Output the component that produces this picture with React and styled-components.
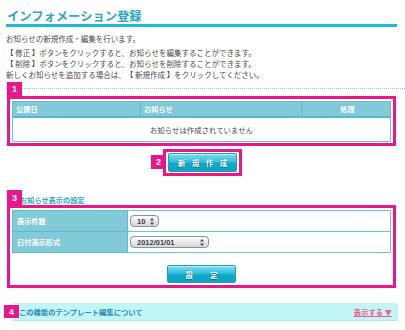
import React from "react";
import styled, { createGlobalStyle } from "styled-components";

const GlobalStyle = createGlobalStyle`
  body {
    margin: 0;
    background: #ffffff;
    font-family: "Noto Sans CJK JP", "Noto Sans", sans-serif;
    color: #4a4a4a;
    text-spacing-trim: space-all;
  }
`;

const PINK = "#e8178c";
const TEAL = "#6cc6da";

function Arrows() {
  return (
    <svg width="4" height="7" viewBox="0 0 4 7">
      <path d="M2 0 L4 2.6 L0 2.6 Z" fill="#3d4450" />
      <path d="M2 7 L4 4.4 L0 4.4 Z" fill="#3d4450" />
    </svg>
  );
}

function App() {
  return (
    <Page>
      <GlobalStyle />
      <Title>インフォメーション登録</Title>
      <Lead>お知らせの新規作成・編集を行います。</Lead>
      <Help>
        【 修正 】ボタンをクリックすると、お知らせを編集することができます。
        <br />
        【 削除 】ボタンをクリックすると、お知らせを削除することができます。
        <br />
        新しくお知らせを追加する場合は、【 新規作成 】をクリックしてください。
      </Help>

      <ListSection>
        <Badge top={0} left={7}>1</Badge>
        <PinkBox pb={1}>
          <Table>
            <thead>
              <tr>
                <Th w={124}>公開日</Th>
                <Th w={157}>お知らせ</Th>
                <Th center>処理</Th>
              </tr>
            </thead>
            <tbody>
              <tr>
                <EmptyCell colSpan={3}>お知らせは作成されていません</EmptyCell>
              </tr>
            </tbody>
          </Table>
        </PinkBox>
      </ListSection>

      <ButtonRow>
        <ButtonFrame>
          <Badge top={3} left={-15}>2</Badge>
          <BlueButton spacing={6.5}>新規作成</BlueButton>
        </ButtonFrame>
      </ButtonRow>

      <SettingSection>
        <Badge top={0} left={7} h={15}>3</Badge>
        <SettingHeading>お知らせ表示の設定</SettingHeading>
        <PinkBox pb={2}>
          <Table>
            <tbody>
              <tr>
                <LabelCell>表示件数</LabelCell>
                <ValueCell>
                  <Select w={29}>
                    <span>10</span>
                    <Arrows />
                  </Select>
                </ValueCell>
              </tr>
              <tr>
                <LabelCell>日付表示形式</LabelCell>
                <ValueCell>
                  <Select w={79}>
                    <span>2012/01/01</span>
                    <Arrows />
                  </Select>
                </ValueCell>
              </tr>
            </tbody>
          </Table>
          <SubmitRow>
            <BlueButton spacing={17} h={18}>設定</BlueButton>
          </SubmitRow>
        </PinkBox>
      </SettingSection>

      <TemplateBar>
        <Badge top={2} left={-8} h={13}>4</Badge>
        <BarTitle>この機能のテンプレート編集について</BarTitle>
        <ShowLink>表示する ▼</ShowLink>
      </TemplateBar>
    </Page>
  );
}

export default App;

const Page = styled.div`
  width: 405px;
  height: 330px;
  overflow: hidden;
`;

const Title = styled.h1`
  margin: 8px 8px 0 6px;
  padding-left: 1px;
  height: 16px;
  line-height: 16px;
  font-size: 12.3px;
  font-weight: 700;
  color: #2aa6c6;
  border-bottom: 3px solid #1ebbd7;
`;

const Lead = styled.p`
  margin: 6px 0 0 6px;
  font-size: 7.5px;
  line-height: 11px;
`;

const Help = styled.p`
  margin: 3px 0 0 6px;
  font-size: 7.5px;
  line-height: 11px;
`;

const Badge = styled.div`
  position: absolute;
  top: ${(p) => p.top}px;
  left: ${(p) => p.left}px;
  z-index: 2;
  width: 15px;
  height: ${(p) => p.h || 14}px;
  background: ${PINK};
  color: #ffffff;
  font-family: "Liberation Sans", Arial, sans-serif;
  font-size: 9px;
  font-weight: 700;
  display: flex;
  align-items: center;
  justify-content: center;
`;

const ListSection = styled.section`
  position: relative;
  margin-top: 2px;
  padding-top: 14px;
  &::before {
    content: "";
    position: absolute;
    top: 6px;
    left: 6px;
    right: 0;
    border-top: 1px dotted #8ccfdc;
  }
`;

const PinkBox = styled.div`
  margin: 0 9px 0 7px;
  border: 3px solid ${PINK};
  padding: 2px 2px ${(p) => p.pb}px 2px;
`;

const Table = styled.table`
  width: 100%;
  border-collapse: collapse;
  border: 1px solid ${TEAL};
  font-size: 7.2px;
`;

const Th = styled.th`
  width: ${(p) => (p.w ? `${p.w}px` : "auto")};
  height: 14px;
  padding: 0 0 0 3px;
  background: #82cad8;
  border: 1px solid #58bdd3;
  border-bottom: 2px solid #55bad1;
  color: #ffffff;
  font-weight: 700;
  text-align: ${(p) => (p.center ? "center" : "left")};
  line-height: 12px;
`;

const EmptyCell = styled.td`
  height: 23px;
  padding: 0;
  text-align: center;
  font-size: 7.4px;
  color: #4a4a4a;
  background: #ffffff;
`;

const ButtonRow = styled.div`
  display: flex;
  justify-content: center;
  margin-top: 3px;
`;

const ButtonFrame = styled.div`
  position: relative;
  border: 3px solid ${PINK};
  padding: 1px 2px;
`;

const BlueButton = styled.div`
  width: 69px;
  height: ${(p) => p.h || 19}px;
  box-sizing: border-box;
  display: flex;
  align-items: center;
  justify-content: center;
  padding-left: ${(p) => p.spacing}px;
  border: 1px solid #1b9fbe;
  border-radius: 2px;
  background: linear-gradient(#7fdcef 0%, #32c1de 45%, #12a8c9 55%, #0fa3c4 100%);
  box-shadow: inset 0 1px 0 rgba(255, 255, 255, 0.5);
  color: #ffffff;
  font-size: 7.5px;
  font-weight: 700;
  letter-spacing: ${(p) => p.spacing}px;
  text-shadow: 0 0 1px #0a6f88, 0 1px 1px #0a6f88;
`;

const SettingSection = styled.section`
  position: relative;
  margin-top: 14px;
`;

const SettingHeading = styled.h2`
  margin: 0;
  height: 15px;
  padding-left: 20px;
  display: flex;
  align-items: flex-end;
  font-size: 7.2px;
  font-weight: 700;
  line-height: 10px;
  color: #2aa7c7;
`;

const LabelCell = styled.td`
  width: 110px;
  height: 20px;
  padding: 0 0 0 4px;
  background: #82cad8;
  border: 1px solid #58bdd3;
  color: #ffffff;
  font-weight: 700;
`;

const ValueCell = styled.td`
  padding: 0 0 0 2px;
  border: 1px solid ${TEAL};
  background: #ffffff;
`;

const Select = styled.div`
  display: inline-flex;
  align-items: center;
  justify-content: space-between;
  vertical-align: middle;
  width: ${(p) => p.w}px;
  height: 12px;
  box-sizing: border-box;
  padding: 0 4px 0 6px;
  border: 1px solid #8a919c;
  border-radius: 4px;
  background: linear-gradient(#ffffff, #e9e9e9 50%, #d6d6d6);
  font-family: "Liberation Sans", Arial, sans-serif;
  font-size: 7.5px;
  font-weight: 700;
  color: #3a3f48;
`;

const SubmitRow = styled.div`
  display: flex;
  justify-content: center;
  margin-top: 12px;
`;

const TemplateBar = styled.div`
  position: relative;
  margin: 15px 7px 0 12px;
  height: 18px;
  padding: 0 6px 0 7px;
  display: flex;
  align-items: center;
  justify-content: space-between;
  background: #c2f5f5;
  box-shadow: inset 0 -1px 0 #b2e9ec;
  font-size: 7.3px;
  font-weight: 700;
`;

const BarTitle = styled.span`
  color: #2f8db0;
`;

const ShowLink = styled.span`
  color: #ef5f86;
  text-decoration: underline;
`;
